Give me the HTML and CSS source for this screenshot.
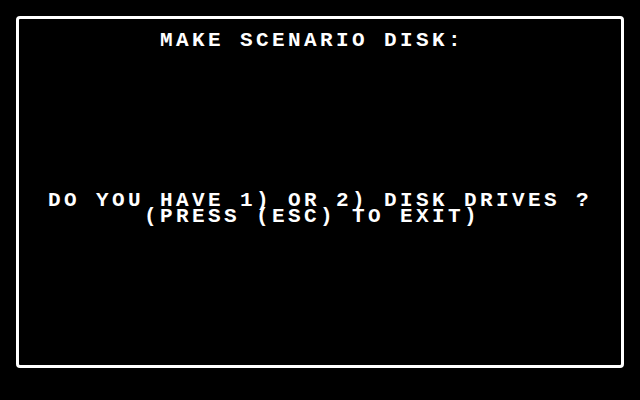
FILE: index.html
```html
<!DOCTYPE html>
<html lang="en">
<head>
  <meta charset="UTF-8">
  <title>Make Scenario Disk</title>
  <link rel="stylesheet" href="styles.css">
</head>
<body>
  <div class="screen">
    <div class="frame">
      <pre class="console">       MAKE SCENARIO DISK:









DO YOU HAVE 1) OR 2) DISK DRIVES ?
      (PRESS (ESC) TO EXIT)</pre>
    </div>
  </div>
</body>
</html>
```

FILE: styles.css
```css
html, body {
  margin: 0;
  background: #000;
}

.screen {
  width: 640px;
  height: 400px;
  padding: 16px;
  box-sizing: border-box;
}

.frame {
  width: 608px;
  height: 352px;
  box-sizing: border-box;
  border: 3px solid #fff;
  border-radius: 4px;
  padding: 14px 0 0 29px;
}

/* 40-column text grid: every cell is 16px wide, 16px tall */
.console {
  margin: 0;
  color: #fff;
  font-family: "Liberation Mono", "DejaVu Sans Mono", monospace;
  font-weight: bold;
  font-size: 21px;
  line-height: 16px;
  letter-spacing: 3.4px;
  white-space: pre;
}
```
